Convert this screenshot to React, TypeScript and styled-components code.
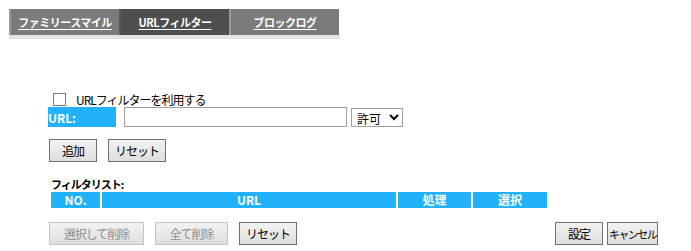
import styled, { createGlobalStyle } from 'styled-components'

const GlobalStyle = createGlobalStyle`
    html, body {
        margin: 0;
        padding: 0;
        background: #ffffff;
    }
    body {
        font-family: 'Noto Sans CJK JP', 'Liberation Sans', sans-serif;
        font-size: 12px;
        color: #000000;
    }
`

const Page = styled.div`
    width: 691px;
    height: 251px;
    padding: 9px 0 0 9px;
    box-sizing: border-box;
    overflow: hidden;
`

const TabBar = styled.nav`
    display: flex;
    width: 331px;
    border-bottom: 4px solid #e4e4e4;
`

const Tab = styled.a<{ $active?: boolean }>`
    display: flex;
    align-items: center;
    justify-content: center;
    width: 110px;
    height: 26px;
    box-sizing: border-box;
    background: ${({ $active }) => ($active ? '#4e4e4e' : '#7b7b7b')};
    border-left: 2px solid ${({ $active }) => ($active ? '#5a5a5a' : '#9a9a9a')};
    color: #ffffff;
    font-size: 11px;
    font-weight: bold;
    text-decoration: underline;
    text-underline-offset: 2px;
    letter-spacing: -0.5px;
    white-space: nowrap;
    cursor: pointer;
`

const Content = styled.div`
    margin: 52px 0 0 39px;
    display: flex;
    flex-direction: column;
`

const CheckRow = styled.label`
    display: flex;
    align-items: center;
    gap: 10px;
    height: 16px;
    padding-left: 5px;
    font-size: 12px;
    letter-spacing: -1px;
`

const CheckBox = styled.input`
    appearance: none;
    margin: 0;
    width: 13px;
    height: 13px;
    border: 1px solid #7a7a7a;
    background: #ffffff;
    box-sizing: border-box;
`

const UrlRow = styled.div`
    display: flex;
    align-items: center;
    height: 20px;
`

const UrlLabel = styled.div`
    display: flex;
    align-items: center;
    width: 68px;
    height: 20px;
    background: #21b2fb;
    color: #ffffff;
    font-weight: bold;
    font-size: 12px;
    margin-right: 8px;
`

const UrlInput = styled.input`
    width: 223px;
    height: 20px;
    box-sizing: border-box;
    border: 1px solid #a0a0a0;
    margin: 0 4px 0 0;
    padding: 0 3px;
`

const Select = styled.select`
    width: 52px;
    height: 19px;
    box-sizing: border-box;
    border: 1px solid #a0a0a0;
    font-family: 'Noto Sans CJK JP', sans-serif;
    font-size: 12px;
    padding: 0 1px;
    background: #ffffff;
`

const ButtonRow = styled.div<{ $spread?: boolean }>`
    display: flex;
    align-items: center;
    justify-content: ${({ $spread }) => ($spread ? 'space-between' : 'flex-start')};
    width: ${({ $spread }) => ($spread ? '609px' : 'auto')};
    margin-left: 1px;
`

const ButtonGroup = styled.div<{ $gap: number }>`
    display: flex;
    gap: ${({ $gap }) => $gap}px;
`

const Button = styled.button<{ $width: number; $tight?: boolean }>`
    width: ${({ $width }) => $width}px;
    height: 23px;
    box-sizing: border-box;
    border: 1px solid ${({ disabled }) => (disabled ? '#c4c4c4' : '#707070')};
    background: linear-gradient(#f2f2f2, #dedede);
    color: ${({ disabled }) => (disabled ? '#8e8e8e' : '#000000')};
    font-family: 'Noto Sans CJK JP', sans-serif;
    font-size: ${({ $tight }) => ($tight ? '11px' : '12px')};
    letter-spacing: ${({ $tight }) => ($tight ? '-1.5px' : '-1px')};
    white-space: nowrap;
    padding: 0;
    border-radius: 0;
`

const ListTitle = styled.div`
    margin: 0 0 0 3px;
    height: 16px;
    line-height: 16px;
    font-size: 11px;
    font-weight: bold;
    letter-spacing: -1px;
`

const TableHead = styled.div`
    display: grid;
    grid-template-columns: 49px 294px 73px 74px;
    gap: 2px;
    width: 496px;
    margin-left: 3px;
`

const HeadCell = styled.div`
    height: 16px;
    background: #21b2fb;
    color: #ffffff;
    font-size: 12px;
    font-weight: bold;
    line-height: 16px;
    text-align: center;
`

export default function App() {
    return (
        <Page>
            <GlobalStyle />
            <TabBar>
                <Tab>ファミリースマイル</Tab>
                <Tab $active>URLフィルター</Tab>
                <Tab>ブロックログ</Tab>
            </TabBar>
            <Content>
                <CheckRow>
                    <CheckBox type="checkbox" />
                    URLフィルターを利用する
                </CheckRow>
                <UrlRow>
                    <UrlLabel>URL:</UrlLabel>
                    <UrlInput type="text" />
                    <Select defaultValue="allow">
                        <option value="allow">許可</option>
                        <option value="deny">拒否</option>
                    </Select>
                </UrlRow>
                <ButtonRow style={{ marginTop: 12 }}>
                    <ButtonGroup $gap={11}>
                        <Button $width={48}>追加</Button>
                        <Button $width={58}>リセット</Button>
                    </ButtonGroup>
                </ButtonRow>
                <ListTitle style={{ marginTop: 14 }}>フィルタリスト:</ListTitle>
                <TableHead>
                    <HeadCell>NO.</HeadCell>
                    <HeadCell>URL</HeadCell>
                    <HeadCell>処理</HeadCell>
                    <HeadCell>選択</HeadCell>
                </TableHead>
                <ButtonRow $spread style={{ marginTop: 14 }}>
                    <ButtonGroup $gap={11}>
                        <Button $width={95} disabled>選択して削除</Button>
                        <Button $width={73} disabled>全て削除</Button>
                        <Button $width={58}>リセット</Button>
                    </ButtonGroup>
                    <ButtonGroup $gap={4}>
                        <Button $width={48}>設定</Button>
                        <Button $width={51} $tight>キャンセル</Button>
                    </ButtonGroup>
                </ButtonRow>
            </Content>
        </Page>
    )
}
